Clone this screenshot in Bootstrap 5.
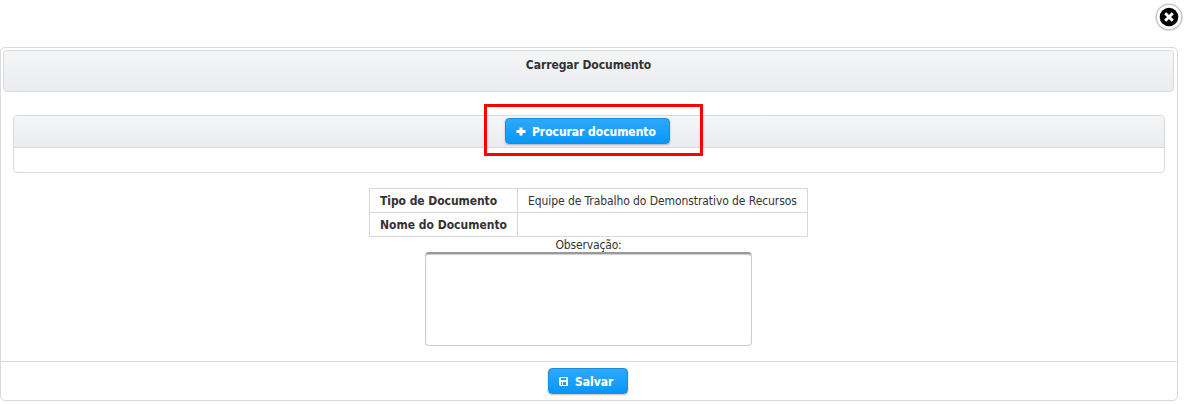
<!DOCTYPE html>
<html lang="pt-BR">
<head>
<meta charset="utf-8">
<meta name="viewport" content="width=device-width, initial-scale=1">
<title>Carregar Documento</title>
<link rel="stylesheet" href="https://cdn.jsdelivr.net/npm/bootstrap@5.3.0/dist/css/bootstrap.min.css">
<style>
body{font-family:"DejaVu Sans Condensed","DejaVu Sans",sans-serif;font-stretch:condensed;font-size:12px;line-height:16px;color:#333;background:#fff;overflow:hidden}
.close-dialog{width:30px;height:30px;top:2px;right:2px;line-height:0}
.dialog-panel{width:1178px;height:354px;margin-top:47px;border:1px solid #dadada;border-radius:5px;padding:2px 0 0}
.bar{background:linear-gradient(#f5f6f8,#e9ebee)}
.dialog-title{height:42px;margin:0 3px 0 2px;padding-top:6px;border:1px solid #d8dadc;border-radius:4px;letter-spacing:-.07px}
.upload{width:1152px;height:58px;margin:23px 0 0 12px;border:1px solid #d8dadc;border-radius:4px}
.upload-bar{height:32px;border-bottom:1px solid #d8dadc;border-radius:3px 3px 0 0}
.highlight{width:219px;height:52px;left:470px;top:-12px;border:3px solid #f00}
.btn-action{--bs-btn-color:#fff;--bs-btn-hover-color:#fff;height:26px;padding:1px 0 0;font-size:12px;font-weight:700;line-height:16px;border:1px solid #1b8ddb;border-radius:4px;background:linear-gradient(#2da9fb,#0797fb);box-shadow:0 1px 2px rgba(0,0,0,.25);text-shadow:0 0 1px rgba(255,255,255,.3)}
.btn-find{width:165px;margin:2px 0 0 491px;letter-spacing:-.04px}
.btn-save{width:80px}
.info{width:439px;margin:15px auto 0 368px;table-layout:fixed;border-collapse:collapse}
.info th,.info td{height:24px;padding:0 0 0 10px;border:1px solid #d8d8d8;white-space:nowrap;line-height:16px}
.info th{width:148px;font-weight:700}
.info td{letter-spacing:-.08px}
.info tr:first-child th{letter-spacing:-.06px}
.obs{width:327px;margin:0 0 0 424px}
.obs label{display:block;line-height:16px;height:15px;letter-spacing:-.15px}
.obs textarea{display:block;width:327px;height:94px;padding:4px;resize:none;border:1px solid #ccc;border-top:2px solid #999;border-radius:4px;box-shadow:inset 0 1px 1px #ccc;outline:0}
.dialog-footer{height:39px;margin-top:15px;padding:6px 0 0 547px;border-top:1px solid #dadada}
</style>
</head>
<body>
<main class="position-relative">
<button class="close-dialog position-absolute border-0 bg-transparent p-0" aria-label="Fechar">
<svg width="30" height="30" viewBox="0 0 30 30"><circle cx="15" cy="15.3" r="14" fill="#e4e4e4"/><circle cx="15" cy="15" r="12.8" fill="#fff" stroke="#bbb"/><circle cx="15" cy="15" r="9.3" fill="#000"/><path d="M11.2 11.2l7.6 7.6m0-7.6l-7.6 7.6" stroke="#fff" stroke-width="3"/></svg>
</button>
<div class="d-flex">
<section class="dialog-panel">
<div class="dialog-title bar text-center fw-bold">Carregar Documento</div>
<div class="upload position-relative">
<div class="upload-bar bar d-flex align-items-start">
<button class="btn btn-action btn-find d-flex align-items-center justify-content-start"><svg class="ms-2 flex-shrink-0" width="18" height="12" viewBox="0 0 18 12"><path d="M7 1.5v8M2.5 5.5h9" stroke="#fff" stroke-width="3"/></svg><span>Procurar documento</span></button>
</div>
<div class="highlight position-absolute"></div>
</div>
<table class="info">
<tr><th>Tipo de Documento</th><td>Equipe de Trabalho do Demonstrativo de Recursos</td></tr>
<tr><th>Nome do Documento</th><td></td></tr>
</table>
<div class="obs text-center"><label for="obs">Observação:</label><textarea id="obs"></textarea></div>
<div class="dialog-footer"><button class="btn btn-action btn-save d-flex align-items-center justify-content-start"><svg class="flex-shrink-0" width="26" height="12" viewBox="0 0 26 12"><path fill="#fff" fill-rule="evenodd" d="M11 1h7l1 1v8h-8l-1-1V2zM12 2v2h5V2zM12 6v3h1V6zM14 6v3h3V6z"/></svg><span>Salvar</span></button></div>
</section>
</div>
</main>
<script src="https://cdn.jsdelivr.net/npm/bootstrap@5.3.0/dist/js/bootstrap.bundle.min.js"></script>
</body>
</html>
